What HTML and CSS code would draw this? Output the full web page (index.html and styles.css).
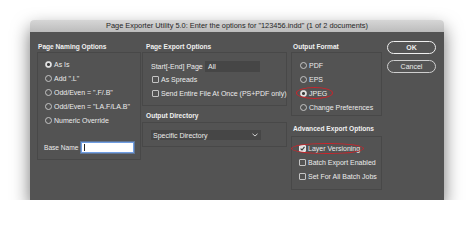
FILE: index.html
```html
<!DOCTYPE html>
<html lang="en">
<head>
    <meta charset="UTF-8">
    <meta name="viewport" content="width=device-width, initial-scale=1.0">
    <title>Page Exporter Utility</title>
    <link rel="stylesheet" href="styles.css">
</head>

<body>

    <div class="window">
        <div class="titlebar">Page Exporter Utility 5.0: Enter the options for "123456.indd" (1 of 2 documents)</div>
        <div class="dialog">

            <!-- naming -->
            <div class="col col-naming">
                <div class="group-label">Page Naming Options</div>
                <div class="group naming">
                    <div class="opt"><span class="radio on"></span>As Is</div>
                    <div class="opt"><span class="radio"></span>Add ".L"</div>
                    <div class="opt"><span class="radio"></span>Odd/Even = ".F/.B"</div>
                    <div class="opt"><span class="radio"></span>Odd/Even = "LA.F/LA.B"</div>
                    <div class="opt"><span class="radio"></span>Numeric Override</div>
                    <div class="base-row">
                        <span class="base-label">Base Name</span>
                        <span class="field white"><span class="caret"></span></span>
                    </div>
                </div>
            </div>

            <!-- export -->
            <div class="col col-export">
                <div class="group-label">Page Export Options</div>
                <div class="group export">
                    <div class="start-row">
                        <span class="start-label">Start[-End] Page</span>
                        <span class="field dark">All</span>
                    </div>
                    <div class="opt check-opt"><span class="check"></span>As Spreads</div>
                    <div class="opt check-opt"><span class="check"></span>Send Entire File At Once (PS+PDF only)</div>
                </div>
                <div class="group-label second">Output Directory</div>
                <div class="group directory">
                    <div class="select">
                        Specific Directory
                        <svg class="chevron" width="6" height="4" viewBox="0 0 6 4"><polyline points="0.5,0.8 3,3 5.5,0.8" fill="none" stroke="#d0d0d0" stroke-width="1"/></svg>
                    </div>
                </div>
            </div>

            <!-- format -->
            <div class="col col-format">
                <div class="group-label">Output Format</div>
                <div class="group format">
                    <div class="opt"><span class="radio"></span>PDF</div>
                    <div class="opt"><span class="radio"></span>EPS</div>
                    <div class="opt"><span class="radio on"></span>JPEG<span class="mark mark-jpeg"></span></div>
                    <div class="opt"><span class="radio"></span>Change Preferences</div>
                </div>
                <div class="group-label second-adv">Advanced Export Options</div>
                <div class="group advanced">
                    <div class="opt"><span class="check on"><svg width="5" height="5" viewBox="0 0 5 5"><polyline points="0.6,2.6 2,4 4.5,0.8" fill="none" stroke="#333" stroke-width="1.1"/></svg></span>Layer Versioning<span class="mark mark-layer"></span></div>
                    <div class="opt"><span class="check"></span>Batch Export Enabled</div>
                    <div class="opt"><span class="check"></span>Set For All Batch Jobs</div>
                </div>
            </div>

            <div class="buttons">
                <button class="btn default">OK</button>
                <button class="btn">Cancel</button>
            </div>

        </div>
    </div>

</body>

</html>
```

FILE: styles.css
```css
body {
    margin: 0;
    background: #fff;
    font-family: "Liberation Sans", Arial, sans-serif;
}

.window {
    width: 414px;
    margin: 20px 0 0 30px;
    border-radius: 4px 4px 0 0;
    box-shadow: 0 8px 18px rgba(0, 0, 0, 0.55);
}

.titlebar {
    height: 12px;
    line-height: 12px;
    background: linear-gradient(#d6d6d6, #bcbcbc);
    color: #262626;
    font-size: 7.4px;
    text-align: center;
    border-radius: 4px 4px 0 0;
    white-space: nowrap;
}

.dialog {
    height: 168px;
    box-sizing: border-box;
    background: #535353;
    display: flex;
    padding: 10px 0 0 7px;
    color: #ececec;
    font-size: 7px;
}

.col-naming {
    width: 104px;
    margin-right: 1px;
}

.col-export {
    width: 145px;
    margin-right: 4px;
}

.col-format {
    width: 91px;
    margin-right: 5px;
}

.group-label {
    height: 10px;
    line-height: 10px;
    font-weight: bold;
    font-size: 6.6px;
    color: #f0f0f0;
    white-space: nowrap;
}

.col-naming .group-label {
    padding-left: 1px;
}

.col-export .group-label {
    padding-left: 4px;
}

.col-format .group-label {
    padding-left: 2px;
}

.group-label.second {
    margin-top: 5px;
}

.group-label.second-adv {
    margin-top: 8px;
}

.group {
    border: 1px solid #484848;
    box-sizing: border-box;
}

/* rows */
.opt {
    position: relative;
    height: 14.2px;
    display: flex;
    align-items: center;
    gap: 2px;
    white-space: nowrap;
}

.radio {
    width: 7px;
    height: 7px;
    border: 1px solid #c4c4c4;
    border-radius: 50%;
    box-sizing: border-box;
    flex: none;
}

.radio.on {
    border-color: #e8e8e8;
    background: radial-gradient(circle, #3c3c3c 0 1.3px, #e0e0e0 1.6px);
}

.check {
    width: 7px;
    height: 7px;
    border: 1px solid #c4c4c4;
    border-radius: 1px;
    box-sizing: border-box;
    flex: none;
    display: flex;
    align-items: center;
    justify-content: center;
}

.check.on {
    background: #e0e0e0;
    border-color: #e8e8e8;
}

.naming {
    height: 108px;
    padding: 4px 0 0 7px;
}

.base-row {
    margin: 14.5px 0 0 -1px;
    height: 11px;
    display: flex;
    align-items: center;
}

.base-label {
    width: 37px;
    font-size: 6.6px;
    white-space: nowrap;
}

.field {
    height: 11px;
    box-sizing: border-box;
    display: flex;
    align-items: center;
}

.field.white {
    width: 53px;
    background: #fff;
    border: 1px solid #6f9de2;
    box-shadow: 0 0 0 1px rgba(110, 160, 230, 0.45);
    padding-left: 2px;
}

.caret {
    width: 1px;
    height: 7px;
    background: #222;
}

.field.dark {
    width: 55px;
    background: #464646;
    padding-left: 3px;
    color: #ececec;
}

.export {
    height: 54px;
    padding: 7px 0 0 8px;
}

.start-row {
    height: 12px;
    display: flex;
    align-items: center;
}

.start-label {
    width: 54px;
    white-space: nowrap;
}

.check-opt {
    height: 14px;
    margin-left: 1px;
}

.directory {
    height: 25px;
    margin-top: 1px;
    padding: 7px 0 0 8px;
}

.select {
    width: 110px;
    height: 10px;
    background: #464646;
    box-sizing: border-box;
    padding: 0 3px 0 2px;
    display: flex;
    align-items: center;
    justify-content: space-between;
    color: #ececec;
}

.format {
    height: 64px;
    padding: 5.5px 0 0 8px;
}

.format .opt {
    height: 14px;
}

.advanced {
    height: 54px;
    margin-top: 2px;
    padding: 4px 0 0 7px;
}

.advanced .opt {
    height: 14px;
}

/* red rings drawn over the options */
.mark {
    position: absolute;
    border: 1.5px solid #c9252c;
    border-radius: 50%;
    box-sizing: border-box;
}

.mark-jpeg {
    left: -4px;
    top: 0.5px;
    width: 37px;
    height: 12px;
}

.mark-layer {
    left: -8px;
    top: 1.5px;
    width: 73px;
    height: 11.5px;
}

.buttons {
    width: 49px;
    margin-top: -1px;
    display: flex;
    flex-direction: column;
}

.btn {
    width: 49px;
    height: 13px;
    padding: 0;
    background: #555;
    border: 1px solid #cfcfcf;
    border-radius: 7px;
    color: #ececec;
    font-family: "Liberation Sans", Arial, sans-serif;
    font-size: 7px;
}

.btn.default {
    border: 1.3px solid #efefef;
    font-weight: bold;
    margin-bottom: 6px;
}
```
